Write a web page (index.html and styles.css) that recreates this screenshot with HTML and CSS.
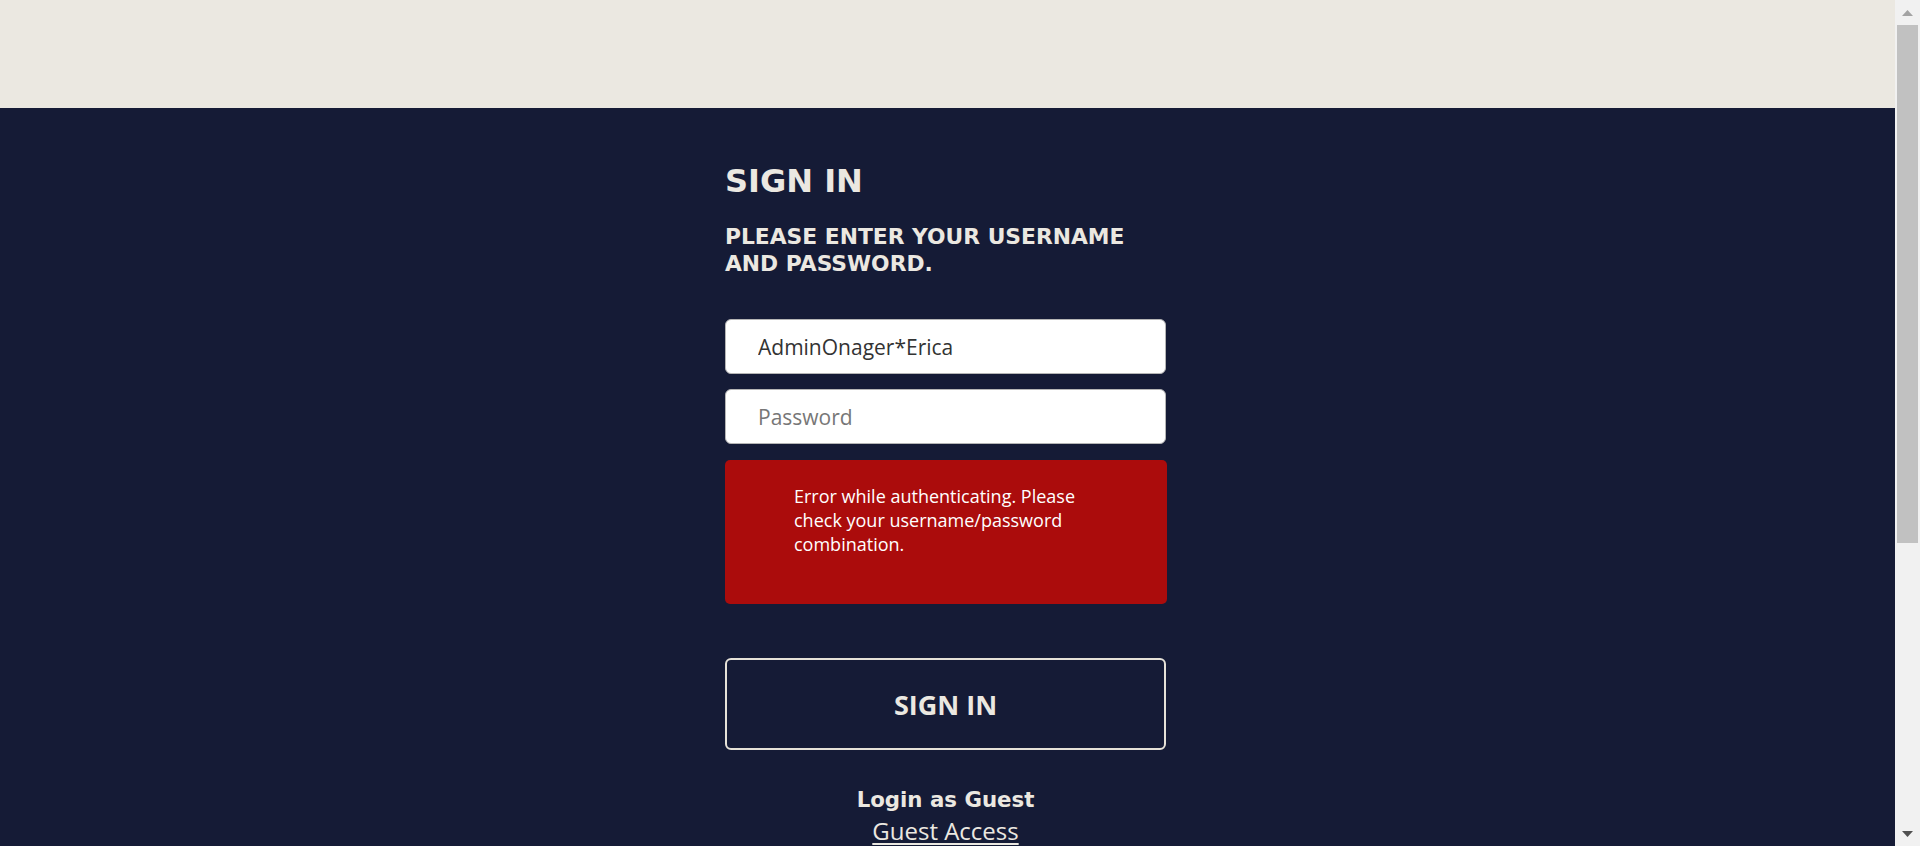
FILE: index.html
```html
<!DOCTYPE html>
<html lang="en">
<head>
<meta charset="utf-8">
<title>Sign In</title>
<link rel="stylesheet" href="styles.css">
</head>
<body>
<div class="window">
  <div class="page">
    <header class="topbar"></header>
    <main class="main">
      <form class="login" onsubmit="return false">
        <h1 class="title">SIGN IN</h1>
        <h2 class="subtitle">PLEASE ENTER YOUR USERNAME AND PASSWORD.</h2>
        <div class="fields">
          <input class="field" type="text" value="AdminOnager*Erica">
          <input class="field" type="password" placeholder="Password">
          <div class="error">Error while authenticating. Please check your username/password combination.</div>
        </div>
        <button class="submit" type="submit">SIGN IN</button>
        <div class="guest">
          <div class="guest-title">Login as Guest</div>
          <a class="guest-link" href="#">Guest Access</a>
        </div>
      </form>
    </main>
  </div>
  <div class="scrollbar" aria-hidden="true">
    <div class="sb-btn">
      <svg class="sb-arrow up" width="11" height="6" viewBox="0 0 11 6"><polygon points="5.5,0 11,6 0,6"/></svg>
    </div>
    <div class="sb-track"><div class="sb-thumb"></div></div>
    <div class="sb-btn">
      <svg class="sb-arrow down" width="11" height="6" viewBox="0 0 11 6"><polygon points="0,0 11,0 5.5,6"/></svg>
    </div>
  </div>
</div>
</body>
</html>
```
FILE: styles.css
```css
html, body {
  margin: 0;
  padding: 0;
}
body {
  background: #151b36;
  color: #ebe8e1;
  font-family: "Open Sans", "Noto Sans", sans-serif;
}
.window {
  display: flex;
  height: 846px;
  overflow: hidden;
}
.page {
  flex: 1;
  min-width: 0;
  overflow: hidden;
}
.topbar {
  height: 108px;
  background: #ebe8e1;
}
.main {
  background: #151b36;
  padding-top: 55px;
  padding-bottom: 474px;
}
.login {
  width: 441px;
  margin-left: calc(50% - 222.5px);
  display: flex;
  flex-direction: column;
}
.title {
  margin: 0;
  font-family: "DejaVu Sans", sans-serif;
  font-weight: bold;
  font-size: 32px;
  line-height: 37px;
  color: #ebe8e1;
}
.subtitle {
  margin: 23px 0 0;
  font-family: "DejaVu Sans", sans-serif;
  font-weight: bold;
  font-size: 21.8px;
  line-height: 27px;
  color: #ebe8e1;
  width: 405px;
}
.fields {
  margin-top: 42px;
  display: flex;
  flex-direction: column;
  gap: 15px;
}
.field {
  box-sizing: border-box;
  height: 55px;
  width: 441px;
  margin: 0;
  border: 1px solid #b5b5b5;
  border-radius: 6px;
  background: #ffffff;
  padding: 0 20px 0 32px;
  font-family: "Open Sans", sans-serif;
  font-size: 21px;
  color: #333333;
  outline: none;
}
.field::placeholder {
  color: #777777;
}
.error {
  box-sizing: border-box;
  width: 442px;
  height: 144px;
  margin-top: 1px;
  background: #ab0c0c;
  border-radius: 5px;
  padding: 24px 69px 0 69px;
  font-size: 18px;
  line-height: 24px;
  color: #ffffff;
}
.submit {
  box-sizing: border-box;
  margin-top: 54px;
  height: 92px;
  width: 441px;
  border: 2px solid #e6e2d8;
  border-radius: 6px;
  background: transparent;
  color: #ebe8e1;
  font-family: "Open Sans", sans-serif;
  font-weight: bold;
  font-size: 27px;
  cursor: pointer;
  padding: 0;
}
.guest {
  margin-top: 37px;
  display: flex;
  flex-direction: column;
  align-items: center;
}
.guest-title {
  font-family: "DejaVu Sans", sans-serif;
  font-weight: bold;
  font-size: 21.3px;
  line-height: 26px;
}
.guest-link {
  color: #ebe8e1;
  font-size: 24px;
  line-height: 36px;
  text-decoration: underline;
  text-underline-offset: 3px;
}
.scrollbar {
  width: 25px;
  flex: none;
  display: flex;
  flex-direction: column;
  background: #f1f1f1;
}
.sb-btn {
  height: 25px;
  flex: none;
  display: flex;
  align-items: center;
  justify-content: center;
}
.sb-arrow.up {
  fill: #a3a3a3;
}
.sb-arrow.down {
  fill: #505050;
}
.sb-track {
  flex: 1;
}
.sb-thumb {
  width: 21px;
  height: 518px;
  margin-left: 2px;
  background: #c1c1c1;
}
```
